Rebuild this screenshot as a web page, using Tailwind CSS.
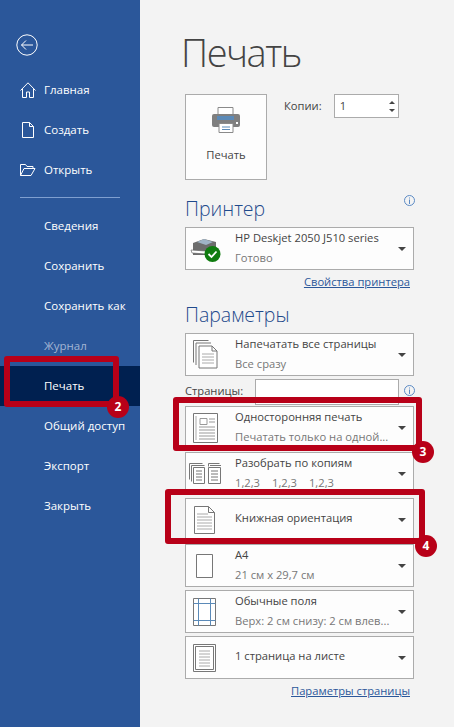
<!DOCTYPE html>
<html lang="ru">
<head>
    <meta charset="UTF-8">
    <meta name="viewport" content="width=device-width, initial-scale=1.0">
    <title>Печать</title>
    <script src="https://cdn.jsdelivr.net/npm/@tailwindcss/browser@4"></script>
</head>
<body class="relative w-[454px] h-[727px] overflow-hidden flex bg-[#f3f3f3] font-['Open_Sans','Noto_Sans',sans-serif]">

    <!-- Sidebar -->
    <aside class="w-[140px] h-full shrink-0 bg-[#2b579a] text-white text-[11.5px] pt-[34px]">
        <svg class="ml-[16px] mb-[14px]" width="22" height="22" viewBox="0 0 22 22" fill="none" stroke="#fff" stroke-width="1">
            <circle cx="11" cy="11" r="10.2"/>
            <path d="M5.500 11H17M10 6.500 5.500 11l4.500 4.500"/>
        </svg>
        <a class="h-10 flex items-center">
            <svg class="ml-[20px] mr-[8px]" width="16" height="16" viewBox="0 0 16 16" fill="none" stroke="#fff"><path d="M.5 8.500 8 .8l7.500 7.700M2.500 7v8.500h4V10h3v5.500h4V7"/></svg>
            Главная
        </a>
        <a class="h-10 flex items-center">
            <svg class="ml-[22px] mr-[10px]" width="12" height="16" viewBox="0 0 12 16" fill="none" stroke="#fff"><path d="M.5.500h7l4 4v11H.5zM7.500.500v4h4"/></svg>
            Создать
        </a>
        <a class="h-10 flex items-center">
            <svg class="ml-[20px] mr-[8px]" width="16" height="12" viewBox="0 0 16 12" fill="none" stroke="#fff"><path d="M.5 11.500V.5h5l1.500 2h6v2M.5 11.500h10.500l4-7H4z"/></svg>
            Открыть
        </a>
        <div class="h-px w-[100px] ml-[20px] mt-[7px] mb-[8px] bg-[#7f9fd0]"></div>
        <a class="h-10 flex items-center pl-[44px]">Сведения</a>
        <a class="h-10 flex items-center pl-[44px]">Сохранить</a>
        <a class="h-10 flex items-center pl-[44px]">Сохранить как</a>
        <a class="h-10 flex items-center pl-[44px] text-[#a3b5d3]">Журнал</a>
        <a class="h-10 flex items-center pl-[44px] bg-[#002050]">Печать</a>
        <a class="h-10 flex items-center pl-[44px] whitespace-nowrap">Общий доступ</a>
        <a class="h-10 flex items-center pl-[44px]">Экспорт</a>
        <a class="h-10 flex items-center pl-[44px]">Закрыть</a>
    </aside>

    <!-- Print panel -->
    <main class="flex-1 pl-[45px] text-[11.2px] text-[#444]">
        <h1 class="-ml-[4px] mt-[25px] h-[69px] text-[38px] tracking-[-1.5px] leading-[54px] font-light text-[#444]">Печать</h1>

        <div class="flex items-start">
            <button class="w-[82px] h-[86px] bg-[#fdfdfd] border border-[#ababab] flex flex-col items-center pt-[12px]">
                <svg width="30" height="26" viewBox="0 0 30 26">
                    <path d="M7 .5h15V8H7z" fill="#fff" stroke="#8a8a8a"/>
                    <rect x="1" y="7" width="28" height="13" rx="2" fill="#7f7f7f"/>
                    <rect x="6" y="9" width="17" height="4" fill="#5b8ab8"/>
                    <path d="M8 16.500h14v9H8z" fill="#fff" stroke="#8a8a8a"/>
                    <path d="M11 20h8M11 22.500h8" stroke="#5b8ab8"/>
                    <rect x="25" y="15" width="2" height="2" fill="#fff"/>
                </svg>
                <span class="mt-[14px]">Печать</span>
            </button>
            <span class="ml-[17px] mt-[4px]">Копии:</span>
            <div class="ml-[12px] w-[65px] h-[24px] bg-white border border-[#ababab] flex items-center justify-between pl-[5px] pr-[3px]">
                <span>1</span>
                <span class="flex flex-col gap-[5px]">
                    <span class="block w-0 h-0 border-x-[3.500px] border-x-transparent border-b-[3.500px] border-b-[#444]"></span>
                    <span class="block w-0 h-0 border-x-[3.500px] border-x-transparent border-t-[3.500px] border-t-[#444]"></span>
                </span>
            </div>
        </div>

        <div class="relative mt-[14px] h-[33px] w-[229px] text-[19.5px] leading-[30px] font-light text-[#1f4a8c]">
            Принтер
            <svg class="absolute right-[-1px] top-[1px]" width="11" height="11" viewBox="0 0 11 11" fill="none" stroke="#5b8ac4"><circle cx="5.500" cy="5.500" r="5"/><path d="M5.500 4.500V9M5.500 2.500v1"/></svg>
        </div>
        <div class="w-[229px] h-[43px] bg-[#fdfdfd] border border-[#ababab] flex items-center">
            <svg class="ml-[4px] w-[31px] shrink-0" width="31" height="28" viewBox="0 0 31 28">
                <path d="M3 8 14 4l12 3v7l-8 6H3z" fill="#6d6d6d"/>
                <path d="M7 7l7-3 9 3-7 3z" fill="#9fb4c6"/>
                <path d="M1 15l15 1v3L2 18z" fill="#fff" stroke="#555" stroke-width=".6"/>
                <circle cx="22.500" cy="19" r="8" fill="#107c10"/>
                <path d="M18.500 19l3 3 5-5.500" fill="none" stroke="#fff" stroke-width="1.800"/>
            </svg>
            <div class="ml-[14px] flex-1 leading-[20px] whitespace-nowrap pb-[2px]">
                <div>HP Deskjet 2050 J510 series</div>
                <div class="text-[#777]">Готово</div>
            </div>
            <span class="mr-[7px] w-0 h-0 border-x-[4px] border-x-transparent border-t-[4px] border-t-[#444]"></span>
        </div>
        <div class="w-[225px] mt-[3px] text-right leading-[18px] text-[#2b579a] underline">Свойства принтера</div>

        <div class="mt-[9px] h-[33px] text-[19.5px] leading-[30px] font-light text-[#1f4a8c]">Параметры</div>
        <div class="w-[229px] h-[43px] bg-[#fdfdfd] border border-[#ababab] flex items-center">
            <svg class="ml-[7px] shrink-0" width="25" height="29" viewBox="0 0 25 29" fill="#fff" stroke="#777">
                <path d="M.5.500h15M.5.500v22M3 3h15M3 3v22"/>
                <path d="M6 6h13l5 5v17H6zM19 6v5h5"/>
                <path d="M9 14h12M9 17h12M9 20h12M9 23h12" stroke="#aaa"/>
            </svg>
            <div class="ml-[17px] flex-1 leading-[20px] whitespace-nowrap pb-[2px]">
                <div>Напечатать все страницы</div>
                <div class="text-[#777]">Все сразу</div>
            </div>
            <span class="mr-[7px] w-0 h-0 border-x-[4px] border-x-transparent border-t-[4px] border-t-[#444]"></span>
        </div>

        <div class="relative mt-[3px] h-[27px] w-[229px] flex items-start">
            <span class="mt-[3px] leading-[18px]">Страницы:</span>
            <div class="ml-[12px] w-[144px] h-[26px] bg-white border border-[#ababab]"></div>
            <svg class="absolute right-[-1px] top-[6px]" width="11" height="11" viewBox="0 0 11 11" fill="none" stroke="#5b8ac4"><circle cx="5.500" cy="5.500" r="5"/><path d="M5.500 4.500V9M5.500 2.500v1"/></svg>
        </div>

        <div class="flex flex-col gap-[3px] w-[229px]">
            <div class="h-[43px] bg-[#fdfdfd] border border-[#ababab] flex items-center">
                <svg class="ml-[7px] shrink-0" width="25" height="30" viewBox="0 0 25 30" fill="#fff" stroke="#777">
                    <path d="M.5.500h24v29H.5z"/>
                    <path d="M3 3v24" stroke="#aaa"/>
                    <path d="M7 5.500h7v6H7z" stroke="#999"/>
                    <path d="M16 6h6M16 9h6M6 14h16M6 17h16M6 20h16M6 23h16M6 26h16" stroke="#999"/>
                </svg>
                <div class="ml-[17px] flex-1 leading-[20px] whitespace-nowrap pb-[2px]">
                    <div>Односторонняя печать</div>
                    <div class="text-[#777]">Печатать только на одной...</div>
                </div>
                <span class="mr-[7px] w-0 h-0 border-x-[4px] border-x-transparent border-t-[4px] border-t-[#444]"></span>
            </div>
            <div class="h-[43px] bg-[#fdfdfd] border border-[#ababab] flex items-center">
                <svg class="ml-[3px] shrink-0" width="33" height="21" viewBox="0 0 33 21" fill="#fff" stroke="#777">
                    <path d="M.5.500h13M.5.500v16M2.500 2.500h13M2.500 2.500v16"/>
                    <path d="M4.500 4.500h11v16h-11zM7 8h6M7 11h6M7 14h6M7 17h6" />
                    <path d="M19.500.500h11M19.500.500v3M21 2.500h11"/>
                    <path d="M19.500 4.500h12v16h-12zM22 8h7M22 11h7M22 14h7M22 17h7"/>
                </svg>
                <div class="ml-[13px] flex-1 leading-[20px] whitespace-nowrap pb-[2px]">
                    <div>Разобрать по копиям</div>
                    <div class="text-[#777] flex gap-[12px]"><span>1,2,3</span><span>1,2,3</span><span>1,2,3</span></div>
                </div>
                <span class="mr-[7px] w-0 h-0 border-x-[4px] border-x-transparent border-t-[4px] border-t-[#444]"></span>
            </div>
            <div class="h-[43px] bg-[#fdfdfd] border border-[#ababab] flex items-center">
                <svg class="ml-[8px] shrink-0" width="21" height="28" viewBox="0 0 21 28" fill="#fff" stroke="#777">
                    <path d="M.5.500h14l6 6v21H.5zM14.500.500v6h6"/>
                    <path d="M3 8h11M3 11h15M3 14h15M3 17h15M3 20h15M3 23h15" stroke="#aaa"/>
                </svg>
                <div class="ml-[20px] flex-1 whitespace-nowrap pb-[3px]">Книжная ориентация</div>
                <span class="mr-[7px] w-0 h-0 border-x-[4px] border-x-transparent border-t-[4px] border-t-[#444]"></span>
            </div>
            <div class="h-[43px] bg-[#fdfdfd] border border-[#ababab] flex items-center">
                <svg class="ml-[10px] shrink-0" width="17" height="24" viewBox="0 0 17 24" fill="#fff" stroke="#777"><path d="M.5.500h16v23H.5z"/></svg>
                <div class="ml-[22px] flex-1 leading-[20px] whitespace-nowrap pb-[2px]">
                    <div>А4</div>
                    <div class="text-[#777]">21 см x 29,7 см</div>
                </div>
                <span class="mr-[7px] w-0 h-0 border-x-[4px] border-x-transparent border-t-[4px] border-t-[#444]"></span>
            </div>
            <div class="h-[43px] bg-[#fdfdfd] border border-[#ababab] flex items-center">
                <svg class="ml-[7px] shrink-0" width="23" height="28" viewBox="0 0 23 28" fill="#fff" stroke="#777">
                    <path d="M.5.500h22v27H.5z"/>
                    <path d="M5.500.500v27M17.500.500v27M.5 5.500h22M.5 22.500h22" stroke="#5b8ab8"/>
                </svg>
                <div class="ml-[19px] flex-1 leading-[20px] whitespace-nowrap pb-[2px]">
                    <div>Обычные поля</div>
                    <div class="text-[#777]">Верх: 2 см снизу: 2 см влев...</div>
                </div>
                <span class="mr-[7px] w-0 h-0 border-x-[4px] border-x-transparent border-t-[4px] border-t-[#444]"></span>
            </div>
            <div class="h-[43px] bg-[#fdfdfd] border border-[#ababab] flex items-center">
                <svg class="ml-[7px] shrink-0" width="23" height="28" viewBox="0 0 23 28" fill="#fff" stroke="#777">
                    <path d="M.5.500h22v27H.5z"/>
                    <path d="M2.500 2.500h18v23h-18z"/>
                    <path d="M6 7h11M6 10h11M6 13h11M6 16h11M6 19h11M6 22h11" stroke="#aaa"/>
                </svg>
                <div class="ml-[19px] flex-1 whitespace-nowrap pb-[3px]">1 страница на листе</div>
                <span class="mr-[7px] w-0 h-0 border-x-[4px] border-x-transparent border-t-[4px] border-t-[#444]"></span>
            </div>
        </div>
        <div class="w-[225px] mt-[3px] text-right leading-[18px] text-[#2b579a] underline">Параметры страницы</div>
    </main>

    <!-- Red annotations on top of the screenshot -->
    <div class="absolute left-[4px] top-[356px] w-[115px] h-[51px] border-[6px] border-[#b80018] rounded-[3px]"></div>
    <div class="absolute left-[107px] top-[396px] w-[22px] h-[22px] rounded-full bg-[#b80018] text-white text-[12px] font-bold flex items-center justify-center">2</div>
    <div class="absolute left-[173px] top-[397px] w-[249px] h-[54px] border-[6px] border-[#b80018] rounded-[3px]"></div>
    <div class="absolute left-[412px] top-[441px] w-[22px] h-[22px] rounded-full bg-[#b80018] text-white text-[12px] font-bold flex items-center justify-center">3</div>
    <div class="absolute left-[165px] top-[489px] w-[260px] h-[55px] border-[6px] border-[#b80018] rounded-[3px]"></div>
    <div class="absolute left-[415px] top-[535px] w-[22px] h-[22px] rounded-full bg-[#b80018] text-white text-[12px] font-bold flex items-center justify-center">4</div>
</body>
</html>
